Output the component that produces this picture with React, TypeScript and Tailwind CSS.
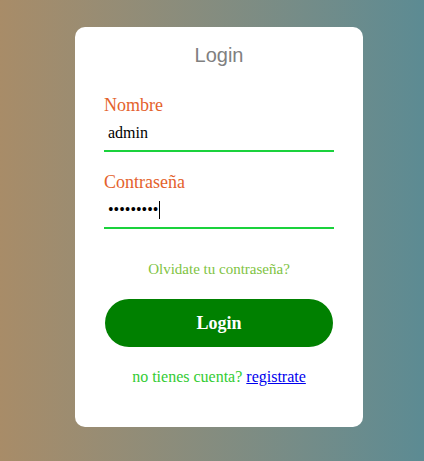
import React from 'react';

const App: React.FC = () => {
  return (
    <div className="min-h-screen w-full bg-gradient-to-r from-[#a88c68] to-[#5c8b93] pt-[27px] pl-[14px] flex justify-center">
      <div className="w-[288px] h-[400px] bg-white rounded-[10px] px-[29px] pt-[17px] flex flex-col font-['Liberation_Serif',serif]">
        <h2 className="text-center text-[20px] leading-[23px] text-[#808080] font-['Liberation_Sans',Arial,sans-serif]">
          Login
        </h2>

        <label className="mt-[28px] text-[18px] leading-[21px] text-[#e4622c]">Nombre</label>
        <input
          type="text"
          defaultValue="admin"
          className="h-[36px] w-full border-b-2 border-[#1ad23c] px-[4px] text-[16px] text-black outline-none bg-transparent font-['Liberation_Serif',serif]"
        />

        <label className="mt-[20px] text-[18px] leading-[21px] text-[#e4622c]">Contraseña</label>
        <div className="relative">
          <input
            type="password"
            defaultValue="123456789"
            className="h-[36px] w-full border-b-2 border-[#1ad23c] px-[4px] text-[16px] text-black outline-none bg-transparent font-['Liberation_Serif',serif]"
          />
          <span className="absolute left-[55px] top-[8px] h-[18px] w-px bg-black" />
        </div>

        <a className="mt-[32px] text-center text-[15px] leading-[17px] text-[#80c342] cursor-pointer">
          Olvidate tu contraseña?
        </a>

        <div className="mt-[21px] px-px">
          <button className="h-[48px] w-full rounded-full bg-[#008000] text-white text-[18px] font-bold font-['Liberation_Serif',serif]">
            Login
          </button>
        </div>

        <p className="mt-[21px] text-center text-[16px] leading-[18px] text-[#33cc33]">
          no tienes cuenta?{' '}
          <a href="#" className="text-[#0000ee] underline">
            registrate
          </a>
        </p>
      </div>
    </div>
  );
};

export default App;
